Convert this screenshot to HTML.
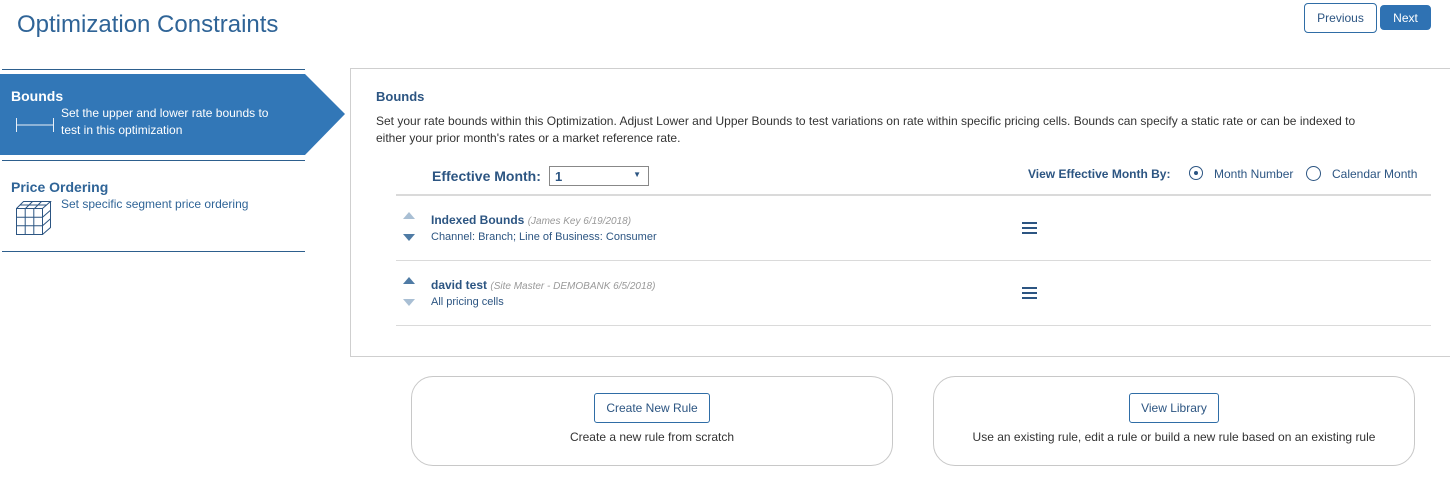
<!DOCTYPE html>
<html><head><style>
*{box-sizing:border-box;margin:0;padding:0}
body{width:1450px;height:485px;background:#fff;font-family:"Liberation Sans",sans-serif;color:#2c5582;position:relative;overflow:hidden;font-size:12px}
.a{position:absolute}
h1{position:absolute;left:17px;top:11px;font-size:24px;font-weight:normal;color:#2f6497}
.btn{position:absolute;border:1px solid #2f6da6;border-radius:4px;font-size:12px;text-align:center}
.line{position:absolute;height:1px;background:#2d5f8d}
.hr{position:absolute;height:1px;background:#dadada}
.tri-up{width:0;height:0;border-left:6px solid transparent;border-right:6px solid transparent;border-bottom:7px solid #a9bfd4}
.tri-dn{width:0;height:0;border-left:6px solid transparent;border-right:6px solid transparent;border-top:7px solid #a9bfd4}
.dk{border-bottom-color:#4f7ba5!important;border-top-color:#4f7ba5!important}
.burger{position:absolute;width:15px}
.burger i{display:block;height:2px;background:#2c5582;margin-bottom:3px}
.card{position:absolute;border:1px solid #c8c8c8;border-radius:22px;height:90px;top:376px;width:482px;text-align:center;color:#333;font-size:12px}
.card .b{display:inline-block;margin-top:16px;border:1px solid #2f6da6;border-radius:3px;color:#2c5582;padding:7px 11px;font-size:12px}
</style></head><body>
<h1>Optimization Constraints</h1>
<div class="btn" style="left:1304px;top:3px;width:73px;height:30px;line-height:28px;color:#2c5582">Previous</div>
<div class="btn" style="left:1380px;top:5px;width:51px;height:25px;line-height:24px;background:#2f72b3;color:#fff;border-color:#2f72b3">Next</div>

<div class="line" style="left:2px;top:69px;width:303px"></div>
<svg class="a" style="left:0;top:74px" width="346" height="82"><polygon points="0,0 305,0 345,40 305,81 0,81" fill="#3277b7"/></svg>
<div class="a" style="left:11px;top:88px;color:#fff;font-weight:bold;font-size:14px">Bounds</div>
<svg class="a" style="left:15px;top:116px" width="40" height="20"><path d="M1.5 2v14M38.5 2v14M1.5 9h37" stroke="#e8eff7" stroke-width="1"/></svg>
<div class="a" style="left:61px;top:105px;color:#fff;line-height:17px">Set the upper and lower rate bounds to<br>test in this optimization</div>
<div class="line" style="left:2px;top:160px;width:303px"></div>
<div class="a" style="left:11px;top:179px;font-weight:bold;font-size:14px;color:#2f6497">Price Ordering</div>
<svg class="a" style="left:15px;top:199px" width="38" height="38"><g fill="none" stroke="#2c5582" stroke-width="1"><path d="M1.5 9.5h26v26h-26zM1.5 9.5l7-7h27l-8 7M35.5 2.5v26l-8 7M10.2 9.5v26M18.8 9.5v26M1.5 18.2h26M1.5 26.8h26M27.5 18.2l8-7M27.5 26.8l8-7M17.5 2.5l-7 7M26.5 2.5l-7 7M5 6h27"/></g></svg>
<div class="a" style="left:61px;top:197px;color:#2f6497">Set specific segment price ordering</div>
<div class="line" style="left:2px;top:251px;width:303px"></div>

<div class="a" style="left:350px;top:68px;width:1110px;height:289px;border:1px solid #cfcfcf"></div>
<div class="a" style="left:376px;top:89px;font-weight:bold;font-size:13px">Bounds</div>
<div class="a" style="left:376px;top:113px;width:1000px;line-height:17px;color:#333">Set your rate bounds within this Optimization. Adjust Lower and Upper Bounds to test variations on rate within specific pricing cells. Bounds can specify a static rate or can be indexed to either your prior month's rates or a market reference rate.</div>
<div class="a" style="left:432px;top:168px;font-weight:bold;font-size:14px">Effective Month:</div>
<div class="a" style="left:549px;top:166px;width:100px;height:20px;border:1px solid #888;font-weight:bold;font-size:13px;padding:2px 5px">1<span style="position:absolute;right:7px;top:3px;font-size:8px">▼</span></div>
<div class="a" style="left:1028px;top:167px;font-weight:bold">View Effective Month By:</div>
<div class="a" style="left:1189px;top:166px;width:14px;height:14px;border:1px solid #2c5582;border-radius:50%"><div style="width:4px;height:4px;background:#2c5582;border-radius:50%;margin:4px"></div></div>
<div class="a" style="left:1214px;top:167px">Month Number</div>
<div class="a" style="left:1306px;top:166px;width:15px;height:15px;border:1px solid #2c5582;border-radius:50%"></div>
<div class="a" style="left:1332px;top:167px">Calendar Month</div>
<div class="hr" style="left:396px;top:194px;width:1035px;height:2px"></div>

<div class="a tri-up" style="left:403px;top:212px"></div>
<div class="a tri-dn dk" style="left:403px;top:234px"></div>
<div class="a" style="left:431px;top:213px"><b style="font-size:12px">Indexed Bounds</b> <i style="color:#999;font-size:10px">(James Key 6/19/2018)</i></div>
<div class="a" style="left:431px;top:231px;font-size:11px">Channel: Branch; Line of Business: Consumer</div>
<div class="burger" style="left:1022px;top:222px"><i></i><i></i><i></i></div>
<div class="hr" style="left:396px;top:260px;width:1035px"></div>

<div class="a tri-up dk" style="left:403px;top:277px"></div>
<div class="a tri-dn" style="left:403px;top:299px"></div>
<div class="a" style="left:431px;top:278px"><b style="font-size:12px">david test</b> <i style="color:#999;font-size:10px">(Site Master - DEMOBANK 6/5/2018)</i></div>
<div class="a" style="left:431px;top:296px;font-size:11px">All pricing cells</div>
<div class="burger" style="left:1022px;top:287px"><i></i><i></i><i></i></div>
<div class="hr" style="left:396px;top:325px;width:1035px"></div>

<div class="card" style="left:411px"><div class="b">Create New Rule</div><div style="margin-top:7px">Create a new rule from scratch</div></div>
<div class="card" style="left:933px"><div class="b">View Library</div><div style="margin-top:7px">Use an existing rule, edit a rule or build a new rule based on an existing rule</div></div>
</body></html>
